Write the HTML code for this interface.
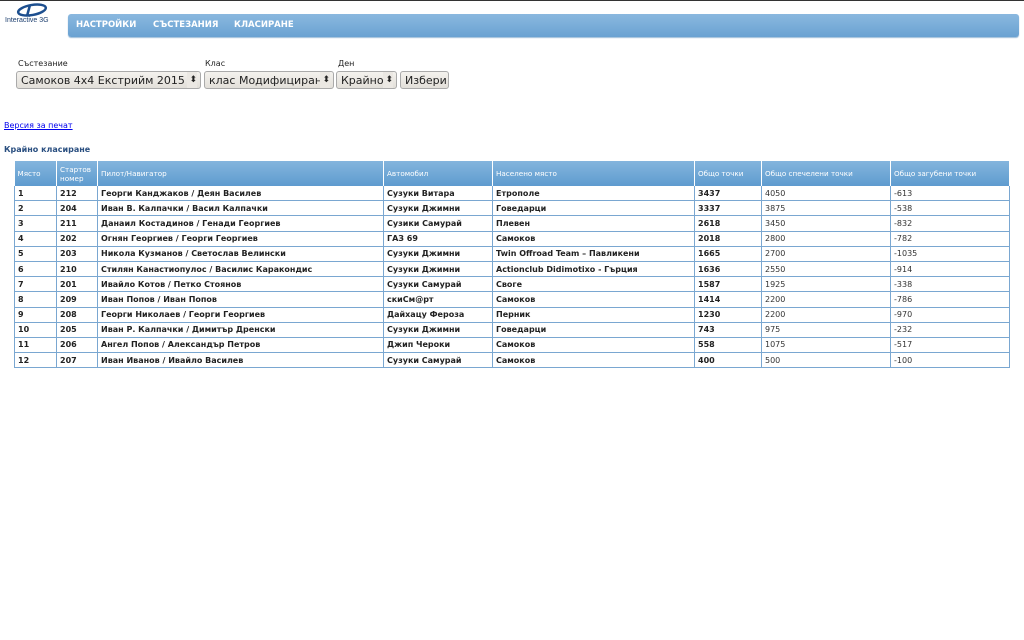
<!DOCTYPE html>
<html><head><meta charset="utf-8"><style>
body{margin:0;width:1024px;height:640px;background:#fff;font-family:"DejaVu Sans","Liberation Sans",sans-serif;position:relative;overflow:hidden;border-top:1px solid #333;box-sizing:border-box}
.nav{position:absolute;left:68px;top:13px;width:951px;height:23px;border-radius:3px;background:linear-gradient(#8ab8df,#6aa2d2);box-shadow:0 1px 1px #9bbbd8}
.nav span{position:absolute;top:6px;color:#fff;font-weight:bold;font-size:8.5px}
.lbl{position:absolute;top:58px;font-size:8px;color:#222}
.sel{position:absolute;top:70px;height:18px;border:1px solid #aaa;border-radius:3px;background:linear-gradient(#f4f2ee,#e2dfd9);font-size:11px;line-height:17px;padding-left:4px;box-sizing:border-box;color:#222;white-space:nowrap;overflow:hidden}
.sel i{position:absolute;right:3px;top:0;font-style:normal;font-size:9px;background:#ebe8e3;padding-left:2px}
table{position:absolute;left:14px;top:160px;width:996px;border-collapse:collapse;font-size:8px;table-layout:fixed}
th{background:linear-gradient(#84b5dd,#5e9bcf);color:#fff;font-weight:normal;text-align:left;height:25px;padding:0 3px;border-right:1px solid #fff;font-size:7.2px;vertical-align:middle}
td{height:14.2px;padding:0 3px;border-right:1px solid #7aa7d1;border-bottom:1px solid #7aa7d1;color:#222;font-weight:bold;white-space:nowrap;overflow:hidden}
td.n{font-weight:normal;color:#333}
tr td:first-child{border-left:1px solid #7aa7d1}
</style></head><body>
<svg style="position:absolute;left:14px;top:2px" width="36" height="14" viewBox="0 0 36 14"><ellipse cx="18" cy="7" rx="14" ry="5" fill="none" stroke="#1d4f8f" stroke-width="2.5" transform="rotate(-10 18 7)"/><path d="M16 2 L13 13" stroke="#1d4f8f" stroke-width="2.5"/></svg>
<div style="position:absolute;left:5px;top:16px;font-size:7px;color:#1d3f6f;font-family:'Liberation Sans',sans-serif">Interactive 3G</div>
<div class="nav"><span style="left:8px">НАСТРОЙКИ</span><span style="left:85px">СЪСТЕЗАНИЯ</span><span style="left:166px">КЛАСИРАНЕ</span></div>
<div class="lbl" style="left:18px">Състезание</div><div class="lbl" style="left:205px">Клас</div><div class="lbl" style="left:338px">Ден</div>
<div class="sel" style="left:16px;width:185px">Самоков 4x4 Екстрийм 2015<i>⬍</i></div>
<div class="sel" style="left:204px;width:130px">клас Модифициран<i>⬍</i></div>
<div class="sel" style="left:336px;width:61px">Крайно<i>⬍</i></div>
<div class="sel" style="left:400px;width:49px">Избери</div>
<a style="position:absolute;left:4px;top:120px;font-size:8px;color:#00e;text-decoration:underline">Версия за печат</a>
<div style="position:absolute;left:4px;top:144px;font-size:8px;font-weight:bold;color:#2a4f80">Крайно класиране</div>
<table>
<colgroup><col style="width:42px"><col style="width:41px"><col style="width:286px"><col style="width:109px"><col style="width:202px"><col style="width:67px"><col style="width:129px"><col></colgroup>
<tr><th>Място</th><th>Стартов<br>номер</th><th>Пилот/Навигатор</th><th>Автомобил</th><th>Населено място</th><th>Общо точки</th><th>Общо спечелени точки</th><th>Общо загубени точки</th></tr>
<tr><td>1</td><td>212</td><td>Георги Канджаков / Деян Василев</td><td>Сузуки Витара</td><td>Етрополе</td><td>3437</td><td class="n">4050</td><td class="n">-613</td></tr>
<tr><td>2</td><td>204</td><td>Иван В. Калпачки / Васил Калпачки</td><td>Сузуки Джимни</td><td>Говедарци</td><td>3337</td><td class="n">3875</td><td class="n">-538</td></tr>
<tr><td>3</td><td>211</td><td>Данаил Костадинов / Генади Георгиев</td><td>Сузики Самурай</td><td>Плевен</td><td>2618</td><td class="n">3450</td><td class="n">-832</td></tr>
<tr><td>4</td><td>202</td><td>Огнян Георгиев / Георги Георгиев</td><td>ГАЗ 69</td><td>Самоков</td><td>2018</td><td class="n">2800</td><td class="n">-782</td></tr>
<tr><td>5</td><td>203</td><td>Никола Кузманов / Светослав Велински</td><td>Сузуки Джимни</td><td>Twin Offroad Team – Павликени</td><td>1665</td><td class="n">2700</td><td class="n">-1035</td></tr>
<tr><td>6</td><td>210</td><td>Стилян Канастиопулос / Василис Каракондис</td><td>Сузуки Джимни</td><td>Actionclub Didimotixo - Гърция</td><td>1636</td><td class="n">2550</td><td class="n">-914</td></tr>
<tr><td>7</td><td>201</td><td>Ивайло Котов / Петко Стоянов</td><td>Сузуки Самурай</td><td>Своге</td><td>1587</td><td class="n">1925</td><td class="n">-338</td></tr>
<tr><td>8</td><td>209</td><td>Иван Попов / Иван Попов</td><td>скиСм@рт</td><td>Самоков</td><td>1414</td><td class="n">2200</td><td class="n">-786</td></tr>
<tr><td>9</td><td>208</td><td>Георги Николаев / Георги Георгиев</td><td>Дайхацу Фероза</td><td>Перник</td><td>1230</td><td class="n">2200</td><td class="n">-970</td></tr>
<tr><td>10</td><td>205</td><td>Иван Р. Калпачки / Димитър Дренски</td><td>Сузуки Джимни</td><td>Говедарци</td><td>743</td><td class="n">975</td><td class="n">-232</td></tr>
<tr><td>11</td><td>206</td><td>Ангел Попов / Александър Петров</td><td>Джип Чероки</td><td>Самоков</td><td>558</td><td class="n">1075</td><td class="n">-517</td></tr>
<tr><td>12</td><td>207</td><td>Иван Иванов / Ивайло Василев</td><td>Сузуки Самурай</td><td>Самоков</td><td>400</td><td class="n">500</td><td class="n">-100</td></tr>
</table>
</body></html>
